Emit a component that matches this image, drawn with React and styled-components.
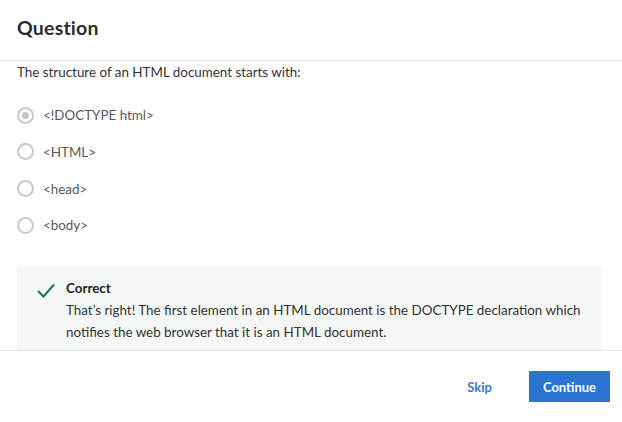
import React from "react";
import styled, { createGlobalStyle } from "styled-components";

const Global = createGlobalStyle`
  html, body { margin: 0; padding: 0; background: #fff; }
  body { font-family: Lato, "Noto Sans", sans-serif; }
`;

const Dialog = styled.div`
  width: 622px;
  height: 422px;
  display: flex;
  flex-direction: column;
  background: #fff;
  overflow: hidden;
`;

const Header = styled.header`
  height: 61px;
  flex: none;
  border-bottom: 1px solid #e2e2e2;
  display: flex;
  align-items: center;
  padding: 0 0 6px 17px;
  box-sizing: border-box;
`;

const Title = styled.h1`
  margin: 0;
  font-size: 19.5px;
  font-weight: 700;
  color: #2c2c2c;
  letter-spacing: 0.2px;
`;

const Body = styled.main`
  flex: 1;
  min-height: 0;
  overflow: hidden;
  padding: 0 20px 0 17px;
`;

const Prompt = styled.p`
  margin: 0 0 14px;
  font-size: 13.4px;
  line-height: 22px;
  color: #333;
`;

const Options = styled.div`
  display: flex;
  flex-direction: column;
`;

const Option = styled.label`
  height: 36.67px;
  display: flex;
  align-items: center;
  gap: 9px;
  font-size: 13.4px;
  color: #585858;
`;

const Radio = styled.span`
  width: 17px;
  height: 17px;
  box-sizing: border-box;
  border-radius: 50%;
  border: 2px solid #c9c9c9;
  display: flex;
  align-items: center;
  justify-content: center;
  flex: none;
  &::after {
    content: "";
    width: 7px;
    height: 7px;
    border-radius: 50%;
    background: ${(p) => (p.$checked ? "#c4c4c4" : "transparent")};
  }
`;

const Feedback = styled.section`
  margin-top: 22px;
  background: #f5f8f7;
  padding: 11px 20px 16px 20px;
  display: flex;
  gap: 11px;
`;

const CheckIcon = styled.svg`
  flex: none;
  margin-top: 6px;
`;

const FeedbackText = styled.div`
  font-size: 13.4px;
  line-height: 22px;
  color: #333;
`;

const FeedbackTitle = styled.div`
  font-weight: 700;
  color: #222;
`;

const Footer = styled.footer`
  height: 72px;
  flex: none;
  border-top: 1px solid #e2e2e2;
  box-sizing: border-box;
  display: flex;
  align-items: center;
  justify-content: flex-end;
  padding: 0 12px 0 0;
  gap: 21px;
`;

const Button = styled.button`
  font-family: inherit;
  font-size: 13px;
  font-weight: 700;
  height: 31px;
  padding: 0 ${(p) => (p.$primary ? "0" : "16px")};
  border: none;
  cursor: pointer;
  background: ${(p) => (p.$primary ? "#2b74d1" : "transparent")};
  color: ${(p) => (p.$primary ? "#fff" : "#3a78c9")};
  width: ${(p) => (p.$primary ? "81px" : "auto")};
`;

const options = ["<!DOCTYPE html>", "<HTML>", "<head>", "<body>"];

export default function App() {
  return (
    <>
      <Global />
      <Dialog>
        <Header>
          <Title>Question</Title>
        </Header>
        <Body>
          <Prompt>The structure of an HTML document starts with:</Prompt>
          <Options>
            {options.map((o, i) => (
              <Option key={o}>
                <Radio $checked={i === 0} />
                {o}
              </Option>
            ))}
          </Options>
          <Feedback>
            <CheckIcon width="18" height="15" viewBox="0 0 18 15">
              <path d="M1 8 L6.5 13.5 L17 1.5" fill="none" stroke="#24795a" strokeWidth="2.2" />
            </CheckIcon>
            <FeedbackText>
              <FeedbackTitle>Correct</FeedbackTitle>
              That’s right! The first element in an HTML document is the DOCTYPE declaration which notifies the web browser that it is an HTML document.
            </FeedbackText>
          </Feedback>
        </Body>
        <Footer>
          <Button>Skip</Button>
          <Button $primary>Continue</Button>
        </Footer>
      </Dialog>
    </>
  );
}
